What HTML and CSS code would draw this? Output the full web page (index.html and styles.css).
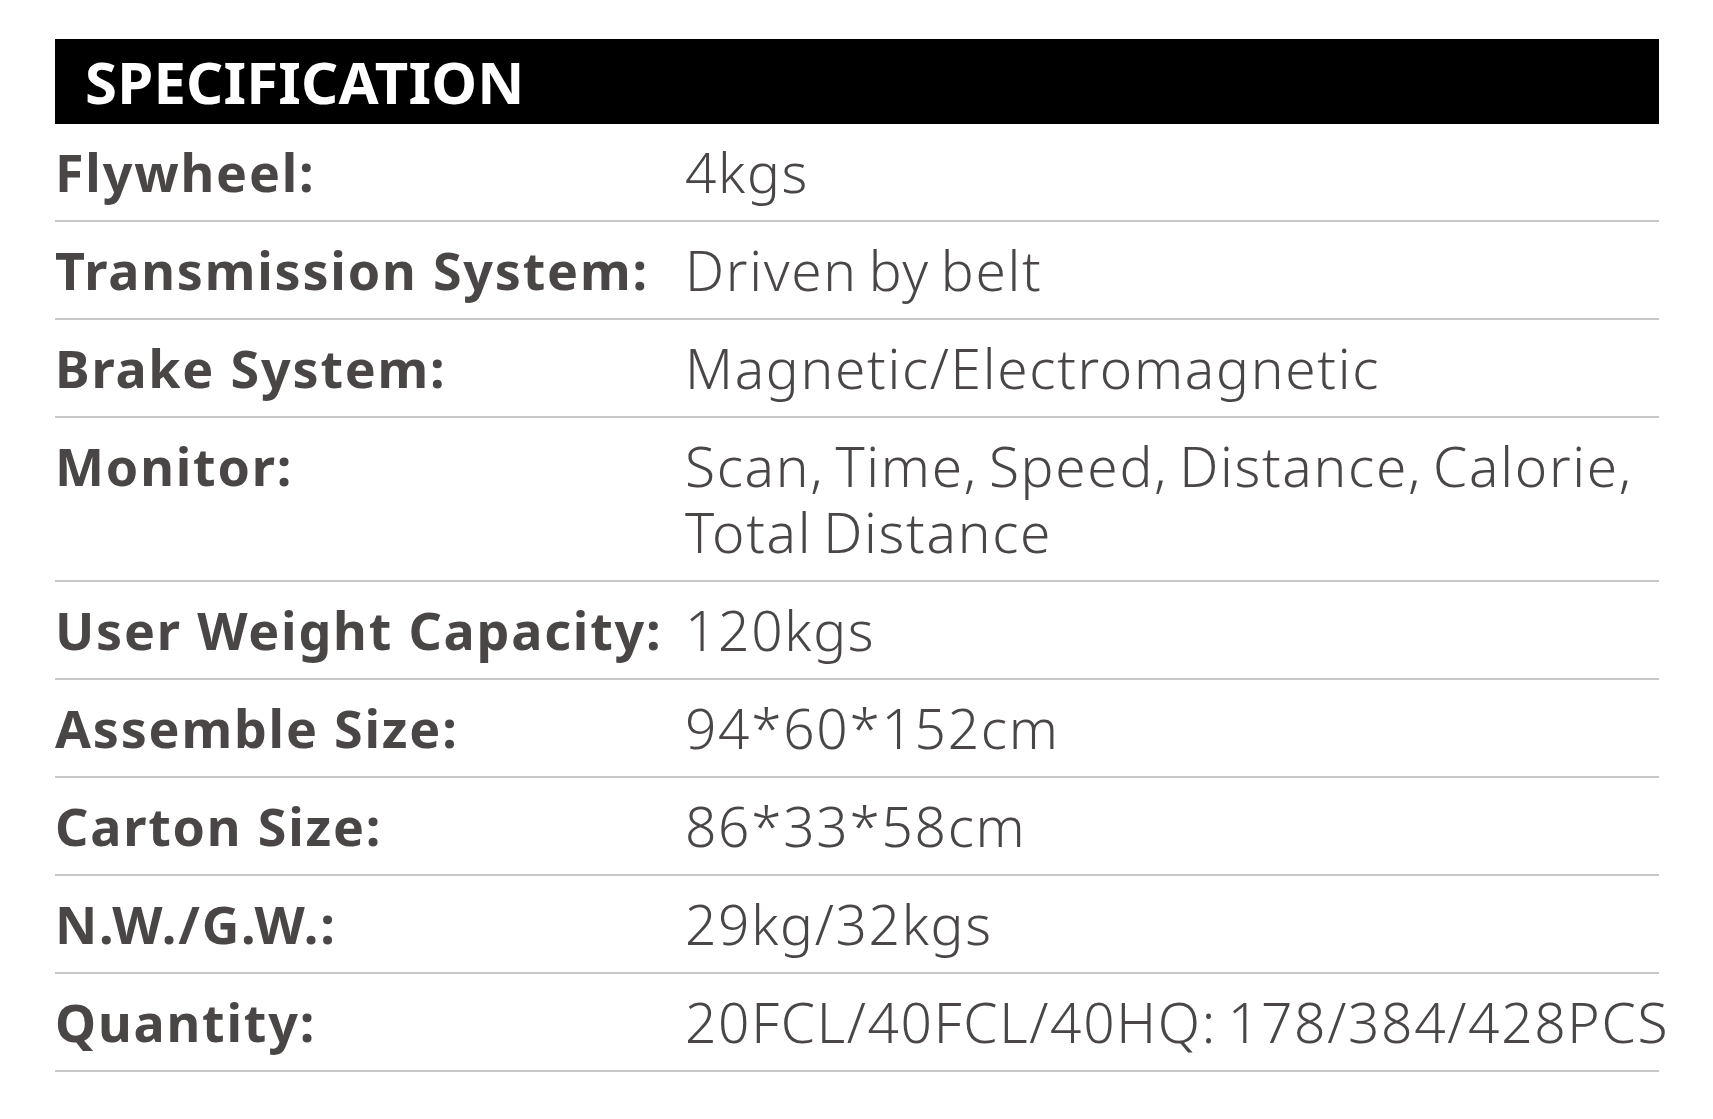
FILE: index.html
```html
<!DOCTYPE html>
<html lang="en">
<head>
<meta charset="utf-8">
<title>Specification</title>
<link rel="stylesheet" href="styles.css">
</head>
<body>
<section class="spec">
  <h1 class="spec-title">SPECIFICATION</h1>
  <div class="row"><div class="label">Flywheel:</div><div class="value">4kgs</div></div>
  <div class="row"><div class="label">Transmission System:</div><div class="value">Driven by belt</div></div>
  <div class="row"><div class="label">Brake System:</div><div class="value">Magnetic/Electromagnetic</div></div>
  <div class="row"><div class="label">Monitor:</div><div class="value"><div class="line">Scan, Time, Speed, Distance, Calorie,</div><div class="line">Total Distance</div></div></div>
  <div class="row"><div class="label">User Weight Capacity:</div><div class="value">120kgs</div></div>
  <div class="row"><div class="label">Assemble Size:</div><div class="value">94*60*152cm</div></div>
  <div class="row"><div class="label">Carton Size:</div><div class="value">86*33*58cm</div></div>
  <div class="row"><div class="label">N.W./G.W.:</div><div class="value">29kg/32kgs</div></div>
  <div class="row"><div class="label">Quantity:</div><div class="value">20FCL/40FCL/40HQ: 178/384/428PCS</div></div>
</section>
</body>
</html>
```
FILE: styles.css
```css
html, body {
  margin: 0;
  padding: 0;
  background: #ffffff;
}

body {
  font-family: "Noto Sans", "DejaVu Sans", sans-serif;
  color: #4a4646;
}

.spec {
  margin: 39px 0 0 55px;
  width: 1604px;
}

.spec-title {
  margin: 0;
  height: 85px;
  background: #000;
  color: #fff;
  display: flex;
  align-items: center;
  padding-left: 30px;
  font-size: 58px;
  font-weight: 700;
  letter-spacing: 0.2px;
}

.row {
  display: grid;
  grid-template-columns: 630px 1fr;
  padding: 15px 0;
  border-bottom: 2px solid #c8c8c8;
  line-height: 66px;
  white-space: nowrap;
}

.label {
  font-size: 52px;
  font-weight: 700;
  letter-spacing: 1.8px;
}

.value {
  font-size: 55px;
  font-weight: 300;
  letter-spacing: 1.7px;
  word-spacing: -5px;
}

.line {
  height: 66px;
}
```
